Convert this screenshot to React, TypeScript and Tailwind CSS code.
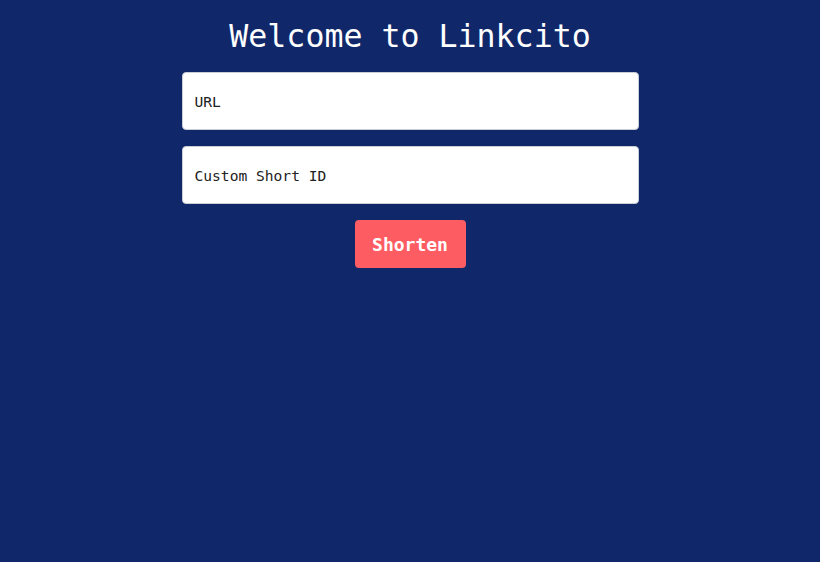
export default function App() {
  return (
    <div className="min-h-[562px] w-full bg-[#10286a] font-['DejaVu_Sans_Mono',monospace]">
      <div className="flex flex-col items-center pt-[16px]">
        <h1 className="text-[31.6px] leading-[40px] text-white">Welcome to Linkcito</h1>
        <form className="mt-[16px] flex w-[457px] flex-col gap-[16px]">
          <input
            type="text"
            placeholder="URL"
            className="h-[58px] w-full rounded-[4px] border border-[#c8cdd6] bg-white px-[12px] text-[14.6px] text-[#222] outline-none placeholder:text-[#222]"
          />
          <input
            type="text"
            placeholder="Custom Short ID"
            className="h-[58px] w-full rounded-[4px] border border-[#c8cdd6] bg-white px-[12px] text-[14.6px] text-[#222] outline-none placeholder:text-[#222]"
          />
        </form>
        <button className="mt-[16px] h-[48px] w-[111px] rounded-[4px] bg-[#fd5c63] text-[18px] font-bold text-white">
          Shorten
        </button>
      </div>
    </div>
  )
}
